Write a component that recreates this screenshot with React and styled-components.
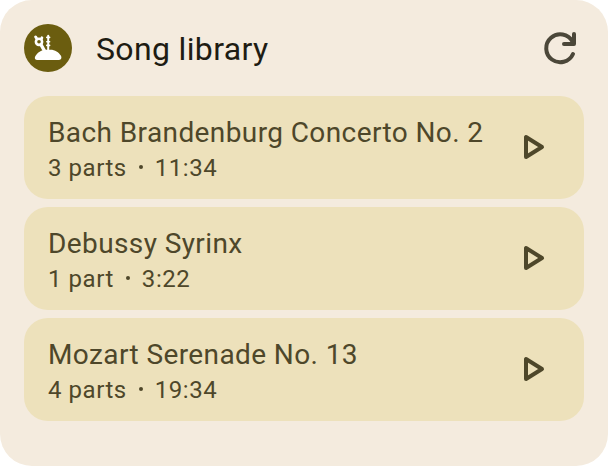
import React from "react";
import styled, { createGlobalStyle } from "styled-components";

const GlobalStyle = createGlobalStyle`
  * { box-sizing: border-box; }
  body { margin: 0; background: #fff; }
`;

const Widget = styled.main`
  width: 608px;
  height: 466px;
  padding: 24px;
  border-radius: 32px;
  background: #f4ebde;
  font-family: Roboto, sans-serif;
`;

const Header = styled.header`
  display: flex;
  align-items: center;
  height: 48px;
  margin-bottom: 24px;
`;

const Logo = styled.svg`
  width: 48px;
  height: 48px;
  flex: none;
`;

const Heading = styled.h1`
  flex: 1;
  margin: 2px 0 0 24px;
  font-size: 32px;
  line-height: 40px;
  font-weight: 400;
  letter-spacing: 0.35px;
  color: #1e1c13;
`;

const IconButton = styled.button`
  display: flex;
  width: 48px;
  height: 48px;
  padding: 0;
  border: 0;
  background: none;
  color: #4b4739;
`;

const Icon = styled.svg`
  width: 48px;
  height: 48px;
  fill: none;
  stroke: currentColor;
  stroke-width: 4;
  stroke-linecap: round;
  stroke-linejoin: round;
`;

const SongList = styled.ul`
  display: flex;
  flex-direction: column;
  gap: 8px;
  margin: 0;
  padding: 0;
  list-style: none;
`;

const SongCard = styled.li`
  display: flex;
  align-items: flex-start;
  justify-content: space-between;
  height: 103px;
  padding: 19px 26px 0 24px;
  border-radius: 24px;
  background: #ede1bb;
  color: #4e472a;
`;

const PlayButton = styled(IconButton)`
  margin-top: 8px;
  color: #4e472a;
`;

const SongTitle = styled.div`
  font-size: 28px;
  line-height: 36px;
  letter-spacing: 0.4px;
  white-space: nowrap;
`;

const SongMeta = styled.div`
  display: flex;
  align-items: center;
  font-size: 24px;
  line-height: 34px;
  letter-spacing: 0.55px;
`;

const Dot = styled.span`
  width: 4px;
  height: 4px;
  margin: 0 12px 3px;
  border-radius: 50%;
  background: currentColor;
`;

const songs = [
  { title: "Bach Brandenburg Concerto No. 2", parts: "3 parts", time: "11:34" },
  { title: "Debussy Syrinx", parts: "1 part", time: "3:22" },
  { title: "Mozart Serenade No. 13", parts: "4 parts", time: "19:34" },
];

export default function App() {
  return (
    <>
      <GlobalStyle />
      <Widget>
        <Header>
          <Logo viewBox="0 0 48 48" aria-hidden="true">
            <circle cx="24" cy="24" r="24" fill="#6b5d0f" />
            <g fill="none" stroke="#fff" strokeLinecap="round">
              <circle cx="15" cy="17.8" r="3.1" strokeWidth="2.6" />
              <path d="M11.6 12.9l1.2 1.8M17.5 14.8l.4-1" strokeWidth="2.8" />
              <path d="M17.2 21l3.2 5.8" strokeWidth="3.4" />
              <path d="M24.2 11.8V27" strokeWidth="2" />
              <path d="M22.8 13.4h2.8M22.8 17.7h2.8M22.8 21.4h2.8" strokeWidth="1.6" />
            </g>
            <path d="M13 36C10.7 36 10.3 33.5 11.6 31.8C14 28.3 17.5 25.8 22 25.8H26.5C31 25.8 34.8 28.5 36.8 31.6C38 33.8 37.4 36 35 36Z" fill="#fff" />
          </Logo>
          <Heading>Song library</Heading>
          <IconButton aria-label="Refresh">
            <Icon viewBox="0 0 48 48">
              <path d="M37 30A14 14 0 1 1 36.5 17.5M38 10v10H28" />
            </Icon>
          </IconButton>
        </Header>
        <SongList>
          {songs.map((song) => (
            <SongCard key={song.title}>
              <div>
                <SongTitle>{song.title}</SongTitle>
                <SongMeta>
                  {song.parts}
                  <Dot />
                  {song.time}
                </SongMeta>
              </div>
              <PlayButton aria-label="Play">
                <Icon viewBox="0 0 48 48">
                  <path d="M16 14v20l16-10z" />
                </Icon>
              </PlayButton>
            </SongCard>
          ))}
        </SongList>
      </Widget>
    </>
  );
}
